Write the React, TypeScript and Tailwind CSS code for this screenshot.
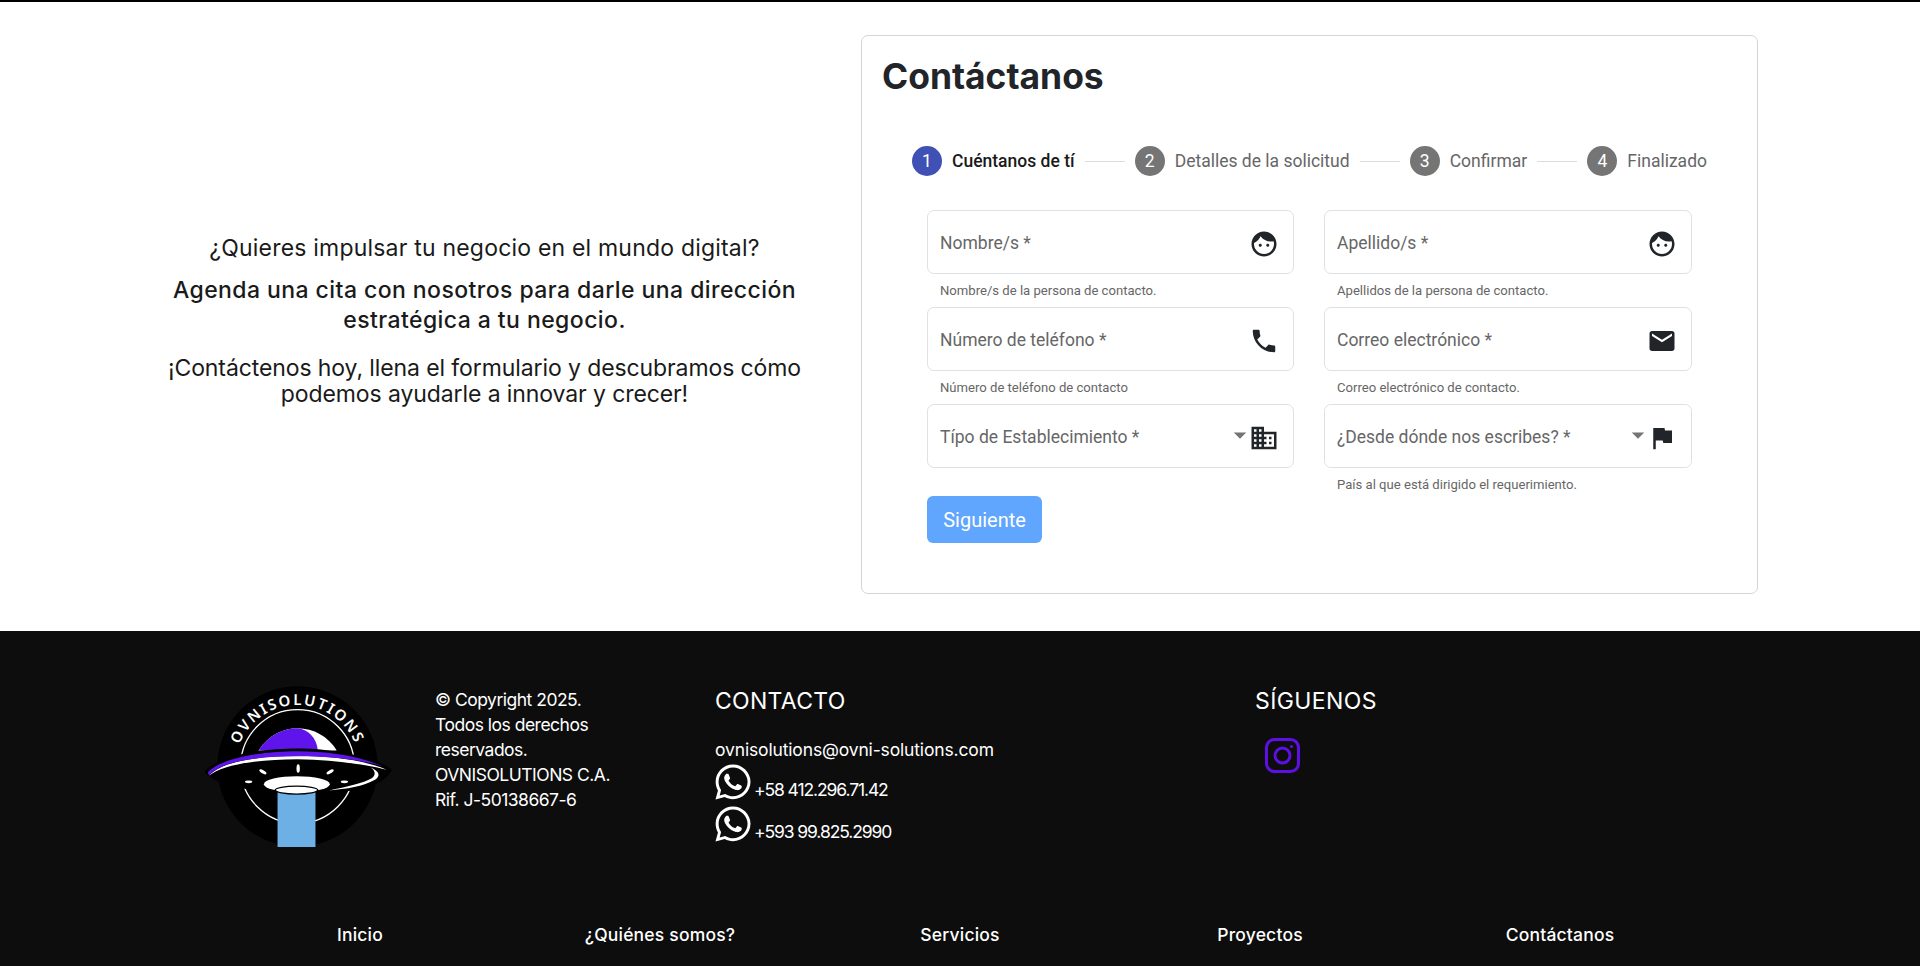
import React from "react";
import { FaWhatsapp } from "react-icons/fa";

const P = {
  face: "M9 11.75c-.69 0-1.25.56-1.25 1.25s.56 1.25 1.25 1.25 1.25-.56 1.25-1.25-.56-1.25-1.25-1.25zm6 0c-.69 0-1.25.56-1.25 1.25s.56 1.25 1.25 1.25 1.25-.56 1.25-1.25-.56-1.25-1.25-1.25zM12 2C6.48 2 2 6.48 2 12s4.48 10 10 10 10-4.48 10-10S17.52 2 12 2zm0 18c-4.41 0-8-3.59-8-8 0-.29.02-.58.05-.86 2.36-1.05 4.23-2.98 5.21-5.37C11.07 8.33 14.05 10 17.42 10c.78 0 1.53-.09 2.25-.26.21.71.33 1.47.33 2.26 0 4.41-3.59 8-8 8z",
  phone: "M6.62 10.79c1.44 2.83 3.76 5.14 6.59 6.59l2.2-2.2c.27-.27.67-.36 1.02-.24 1.12.37 2.33.57 3.57.57.55 0 1 .45 1 1V20c0 .55-.45 1-1 1-9.39 0-17-7.61-17-17 0-.55.45-1 1-1h3.5c.55 0 1 .45 1 1 0 1.25.2 2.45.57 3.57.11.35.03.74-.25 1.02l-2.2 2.2z",
  mail: "M20 4H4c-1.1 0-1.99.9-1.99 2L2 18c0 1.1.9 2 2 2h16c1.1 0 2-.9 2-2V6c0-1.1-.9-2-2-2zm0 4l-8 5-8-5V6l8 5 8-5v2z",
  domain: "M12 7V3H2v18h20V7H12zM6 19H4v-2h2v2zm0-4H4v-2h2v2zm0-4H4V9h2v2zm0-4H4V5h2v2zm4 12H8v-2h2v2zm0-4H8v-2h2v2zm0-4H8V9h2v2zm0-4H8V5h2v2zm10 12h-8v-2h2v-2h-2v-2h2v-2h-2V9h8v10zm-2-8h-2v2h2v-2zm0 4h-2v2h2v-2z",
  flag: "M14.4 6L14 4H5v17h2v-7h5.6l.4 2h7V6z",
};

const MI = ({ d }: { d: string }) => (
  <svg viewBox="0 0 24 24" className="w-[30px] h-[30px] fill-[#212529] mt-[4px] shrink-0">
    <path d={d} />
  </svg>
);

const Field = ({ label, help, icon, select }: { label: string; help?: string; icon: string; select?: boolean }) => (
  <div className="h-[97px]">
    <div className="h-[64px] border border-[#dee2e6] rounded-[7px] pl-[12px] pr-[14px] flex items-center justify-between">
      <span className="text-[17.5px] text-[#666666] leading-none mt-[3px]">{label}</span>
      <div className="flex items-center">
        {select && (
          <svg viewBox="0 0 24 24" className="w-[30px] h-[30px] fill-[#757575] -mt-[2px] -mr-[6px]">
            <path d="M7 10l5 5 5-5z" />
          </svg>
        )}
        <MI d={icon} />
      </div>
    </div>
    {help && <p className="text-[13.1px] leading-[16px] text-[#666666] pl-[13px] mt-[9px]">{help}</p>}
  </div>
);

const Step = ({ n, label, active }: { n: number; label: string; active?: boolean }) => (
  <div className="flex items-center gap-[10px] shrink-0">
    <span className={`w-[30px] h-[30px] rounded-full text-white text-[17.5px] flex items-center justify-center ${active ? "bg-[#3f51b5]" : "bg-[#757575]"}`}>{n}</span>
    <span className={`text-[17.5px] ${active ? "text-[#1a1a1a] font-medium" : "text-[#666666]"}`}>{label}</span>
  </div>
);

const Line = () => <div className="flex-1 h-px bg-[#dcdcdc] mx-[10px]" />;

const Logo = () => (
  <svg viewBox="75 45 560 490" className="w-[187px] h-[163px] shrink-0">
    <circle cx="352" cy="290" r="241" fill="#000" />
    <path id="arc" d="M 165 292 A 187 187 0 0 1 539 292" fill="none" />
    <text fill="#fff" fontSize="45" fontWeight="600" fontFamily="'Noto Sans', sans-serif" letterSpacing="6">
      <textPath href="#arc" startOffset="50%" textAnchor="middle">OVNISOLUTIONS</textPath>
    </text>
    <circle cx="352" cy="290" r="171" fill="none" stroke="#fff" strokeWidth="4" />
    <path d="M235 242 C 265 195 310 175 352 175 C 400 175 445 200 470 242 Z" fill="#fff" />
    <path d="M235 242 C 265 195 310 175 352 175 C 385 178 410 205 413 242 Z" fill="#5f14ec" />
    <path d="M72 306 C 120 252 260 236 352 236 C 460 236 590 262 636 300 C 612 342 560 364 450 368 L 250 368 C 170 352 100 342 72 306 Z" fill="#000" />
    <path d="M86 318 C 125 272 250 258 352 258 C 450 258 560 272 620 300 C 560 284 460 270 352 268 C 230 268 125 285 86 318 Z" fill="#fff" />
    <path d="M82 308 C 125 260 260 244 352 244 C 440 244 530 256 610 290 C 540 268 450 259 352 259 C 240 259 125 272 86 316 Z" fill="#5f14ec" />
    <path d="M570 292 C 600 305 602 318 585 330 C 550 350 500 358 446 362 C 500 350 550 340 575 325 C 590 315 585 300 570 292 Z" fill="#fff" />
    <ellipse cx="205" cy="336" rx="11" ry="4" fill="#fff" />
    <ellipse cx="248" cy="306" rx="12" ry="5" fill="#fff" transform="rotate(30 248 306)" />
    <ellipse cx="354" cy="296" rx="5" ry="13" fill="#fff" />
    <ellipse cx="450" cy="306" rx="12" ry="5" fill="#fff" transform="rotate(-30 450 306)" />
    <ellipse cx="493" cy="336" rx="11" ry="4" fill="#fff" />
    <ellipse cx="350" cy="343" rx="99" ry="24" fill="#fff" />
    <rect x="292" y="365" width="114" height="167" fill="#6cb0e6" />
    <ellipse cx="349" cy="361" rx="64" ry="12" fill="#fff" stroke="#000" strokeWidth="4" />
  </svg>
);

const Phone = ({ n, top }: { n: string; top: string }) => (
  <div className={`flex items-end gap-[4px] text-[17.5px] leading-[25px] h-[35px] ${top}`}>
    <FaWhatsapp className="w-[40px] h-[40px] -mx-[2.5px] -my-[2.5px] shrink-0" />
    <span className="-mb-[3px] tracking-[-1.1px]">{n}</span>
  </div>
);

export default function App() {
  const mont = "font-['Inter','Liberation_Sans',sans-serif]";
  return (
    <div className="w-full h-[966px] overflow-hidden bg-white font-['Roboto',sans-serif]">
      <div className="h-[2px] bg-black" />
      <section className="h-[629px] pt-[33px] pl-[108px] flex">
        <div className={`w-[753px] h-[559px] flex flex-col items-center justify-center text-center text-[#1a1a1a] text-[23px] pt-[12px] ${mont}`}>
          <p className="leading-[28px] mb-[13px] tracking-[0.2px]">¿Quieres impulsar tu negocio en el mundo digital?</p>
          <p className="leading-[30px] mb-[20px] font-medium w-[660px] tracking-[0.43px]">Agenda una cita con nosotros para darle una dirección estratégica a tu negocio.</p>
          <p className="leading-[26px] w-[660px] tracking-[-0.1px]">¡Contáctenos hoy, llena el formulario y descubramos cómo podemos ayudarle a innovar y crecer!</p>
        </div>
        <div className="w-[897px] h-[559px] border border-[#d5d5d5] rounded-[7px]">
          <h1 className={`text-[35.4px] font-bold text-[#212529] leading-[42px] pl-[20px] pt-[20px] ${mont}`}>Contáctanos</h1>
          <div className="flex items-center ml-[50px] mr-[50px] mt-[43px] h-[40px]">
            <Step n={1} label="Cuéntanos de tí" active />
            <Line />
            <Step n={2} label="Detalles de la solicitud" />
            <Line />
            <Step n={3} label="Confirmar" />
            <Line />
            <Step n={4} label="Finalizado" />
          </div>
          <div className="grid grid-cols-[367px_368px] gap-x-[30px] ml-[65px] mt-[29px]">
            <Field label="Nombre/s *" help="Nombre/s de la persona de contacto." icon={P.face} />
            <Field label="Apellido/s *" help="Apellidos de la persona de contacto." icon={P.face} />
            <Field label="Número de teléfono *" help="Número de teléfono de contacto" icon={P.phone} />
            <Field label="Correo electrónico *" help="Correo electrónico de contacto." icon={P.mail} />
            <Field label="Típo de Establecimiento *" icon={P.domain} select />
            <Field label="¿Desde dónde nos escribes? *" help="País al que está dirigido el requerimiento." icon={P.flag} select />
          </div>
          <button className="ml-[65px] -mt-[5px] block w-[115px] h-[47px] rounded-[6px] bg-[#60a5fe] text-white text-[20px]">Siguiente</button>
        </div>
      </section>
      <footer className={`h-[335px] bg-[#0d0d0d] text-white ${mont}`}>
        <div className="flex pt-[54px] pl-[205px] h-[283px]">
          <div className="w-[230px]"><Logo /></div>
          <div className="w-[280px] text-[17.5px] leading-[25px] pt-[2px] tracking-[-0.5px]">
            <p className="w-[185px]">© Copyright 2025. Todos los derechos reservados. OVNISOLUTIONS C.A. Rif. J-50138667-6</p>
          </div>
          <div className="w-[540px]">
            <h3 className="text-[23px] leading-[32px] tracking-[0.3px]">CONTACTO</h3>
            <p className="text-[17.5px] leading-[25px] mt-[20px] tracking-[-0.15px]">ovnisolutions@ovni-solutions.com</p>
            <Phone n="+58 412.296.71.42" top="mt-[2px]" />
            <Phone n="+593 99.825.2990" top="mt-[7px]" />
          </div>
          <div>
            <h3 className="text-[23px] leading-[32px] tracking-[0.4px]">SÍGUENOS</h3>
            <svg viewBox="0 0 35 35" className="w-[35px] h-[35px] ml-[10px] mt-[21px] fill-none stroke-[#5f0fe6]" strokeWidth="3">
              <rect x="1.5" y="1.5" width="32" height="32" rx="8" />
              <circle cx="17.5" cy="17.5" r="7.5" />
              <circle cx="26.5" cy="8.5" r="1.6" className="fill-[#5f0fe6]" strokeWidth="0" />
            </svg>
          </div>
        </div>
        <nav className="grid grid-cols-5 w-[1500px] ml-[210px] text-center text-[17.5px] font-medium leading-[25px] mt-[8px] tracking-[0.2px]">
          <a>Inicio</a>
          <a>¿Quiénes somos?</a>
          <a>Servicios</a>
          <a>Proyectos</a>
          <a>Contáctanos</a>
        </nav>
      </footer>
    </div>
  );
}
